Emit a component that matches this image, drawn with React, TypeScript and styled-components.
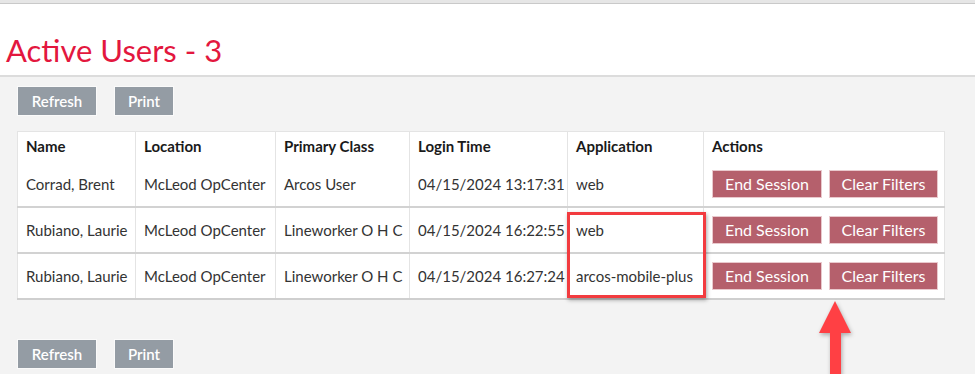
import React from 'react';
import styled, { createGlobalStyle } from 'styled-components';

const GlobalStyle = createGlobalStyle`
  html, body {
    margin: 0;
    padding: 0;
    background: #f3f3f3;
    font-family: Lato, 'Liberation Sans', sans-serif;
    overflow: hidden;
  }
`;

const Page = styled.div`
  position: relative;
  width: 975px;
  height: 374px;
  overflow: hidden;
  background: #f3f3f3;
`;

const TopBar = styled.div`
  height: 3px;
  background: #e6e6e6;
  border-bottom: 1px solid #c9c9c9;
`;

const TitleBar = styled.div`
  height: 73px;
  background: #fff;
  border-bottom: 2px solid #dcdcdc;
  box-sizing: border-box;
  padding: 29px 0 0 6px;
`;

const Title = styled.h1`
  margin: 0;
  font-family: Lato, 'Liberation Sans', sans-serif;
  font-weight: 400;
  font-size: 31px;
  line-height: 34px;
  color: #e3173e;
`;

const Content = styled.div`
  display: flex;
  flex-direction: column;
  padding: 9px 0 0 17px;
`;

const Toolbar = styled.div<{ top?: number }>`
  display: flex;
  gap: 17px;
  margin-top: ${(p) => p.top ?? 0}px;
`;

const GrayButton = styled.button<{ w: number }>`
  width: ${(p) => p.w}px;
  height: 30px;
  background: #949ca4;
  border: 1px solid #fafafa;
  color: #fff;
  font-family: Lato, 'Liberation Sans', sans-serif;
  font-weight: 600;
  font-size: 15px;
  padding: 0;
  cursor: pointer;
`;

const Table = styled.table`
  margin-top: 15px;
  width: 927px;
  table-layout: fixed;
  border-collapse: collapse;
  background: #fff;
  border-left: 1px solid #e4e4e4;
  border-right: 1px solid #e4e4e4;
  border-top: 1px solid #e4e4e4;
  border-bottom: 2px solid #cfcfcf;
  font-size: 15px;
  color: #333;
`;

const Th = styled.th<{ w: number }>`
  width: ${(p) => p.w}px;
  box-sizing: border-box;
  text-align: left;
  font-weight: 700;
  color: #1a1a1a;
  padding: 5px 8px 0;
  height: 30px;
  vertical-align: top;
  border-left: 1px solid #e4e4e4;
  &:first-child {
    border-left: none;
  }
`;

const Row = styled.tr<{ last?: boolean }>`
  border-bottom: ${(p) => (p.last ? 'none' : '2px solid #d2d2d2')};
`;

const Td = styled.td`
  height: 44px;
  padding: 0 8px;
  white-space: nowrap;
  overflow: visible;
  border-left: 1px solid #e4e4e4;
  &:first-child {
    border-left: none;
  }
`;

const Actions = styled.div`
  display: flex;
  gap: 7px;
`;

const RedButton = styled.button<{ w: number }>`
  width: ${(p) => p.w}px;
  height: 28px;
  flex-shrink: 0;
  background: #b5606c;
  border: 1px solid #e9c9cd;
  color: #fff;
  font-family: Lato, 'Liberation Sans', sans-serif;
  font-size: 16px;
  padding: 0;
  cursor: pointer;
`;

const Highlight = styled.div`
  position: absolute;
  left: 567px;
  top: 212px;
  width: 139px;
  height: 86px;
  box-sizing: border-box;
  border: 3px solid #f23b3f;
  box-shadow: 1px 2px 4px rgba(0, 0, 0, 0.35);
  pointer-events: none;
`;

const Arrow = styled.svg`
  position: absolute;
  left: 817px;
  top: 299px;
  filter: drop-shadow(1px 2px 2px rgba(0, 0, 0, 0.3));
`;

const users = [
  { name: 'Corrad, Brent', loc: 'McLeod OpCenter', cls: 'Arcos User', time: '04/15/2024 13:17:31', app: 'web' },
  { name: 'Rubiano, Laurie', loc: 'McLeod OpCenter', cls: 'Lineworker O H C', time: '04/15/2024 16:22:55', app: 'web' },
  { name: 'Rubiano, Laurie', loc: 'McLeod OpCenter', cls: 'Lineworker O H C', time: '04/15/2024 16:27:24', app: 'arcos-mobile-plus' },
];

const App = (): JSX.Element => (
  <Page>
    <GlobalStyle />
    <TopBar />
    <TitleBar>
      <Title>Active Users - {users.length}</Title>
    </TitleBar>
    <Content>
      <Toolbar>
        <GrayButton w={80}>Refresh</GrayButton>
        <GrayButton w={60}>Print</GrayButton>
      </Toolbar>
      <Table>
        <thead>
          <tr>
            <Th w={118}>Name</Th>
            <Th w={140}>Location</Th>
            <Th w={134}>Primary Class</Th>
            <Th w={158}>Login Time</Th>
            <Th w={136}>Application</Th>
            <Th w={241}>Actions</Th>
          </tr>
        </thead>
        <tbody>
          {users.map((u, i) => (
            <Row key={i} last={i === users.length - 1}>
              <Td>{u.name}</Td>
              <Td>{u.loc}</Td>
              <Td>{u.cls}</Td>
              <Td>{u.time}</Td>
              <Td>{u.app}</Td>
              <Td>
                <Actions>
                  <RedButton w={110}>End Session</RedButton>
                  <RedButton w={109}>Clear Filters</RedButton>
                </Actions>
              </Td>
            </Row>
          ))}
        </tbody>
      </Table>
      <Toolbar top={39}>
        <GrayButton w={80}>Refresh</GrayButton>
        <GrayButton w={60}>Print</GrayButton>
      </Toolbar>
    </Content>
    <Highlight />
    <Arrow width="38" height="80" viewBox="0 0 38 80">
      <path d="M18 2 L34 34 L24 34 L24 80 L13 80 L13 34 L2 34 Z" fill="#ff4044" />
    </Arrow>
  </Page>
);

export default App;
